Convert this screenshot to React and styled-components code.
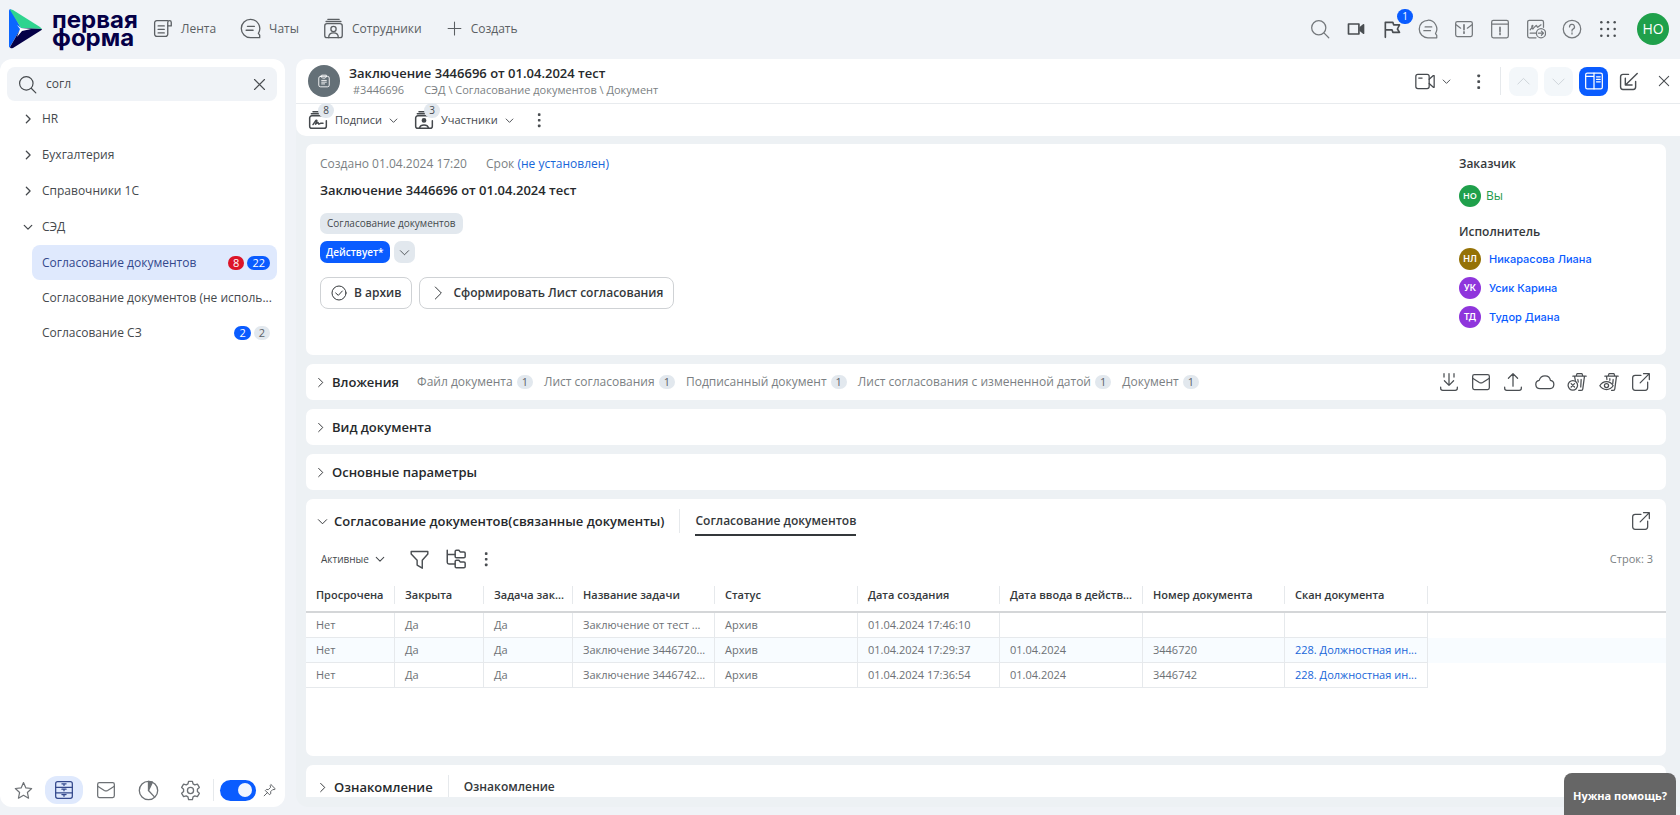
import React, { useState } from "react";
import styled, { createGlobalStyle, css } from "styled-components";

const ICONS = {
  feed: (
    <>
      <path d="M18 3H5.5A2.5 2.5 0 0 0 3 5.5v13A2.5 2.5 0 0 0 5.5 21h10a2.5 2.5 0 0 0 2.5-2.5V9" />
      <path d="M18 9V5a2 2 0 0 1 4 0v4z" />
      <path d="M7 9h7M7 13h7M7 17h7" />
    </>
  ),
  chat: (
    <>
      <path d="M12 1.5a10.5 10.5 0 1 0 0 21h10.5v-3l-1.500-2A10.500 10.500 0 0 0 12 1.500z" />
      <path d="M8.500 9.500h8M7 14h8" />
    </>
  ),
  people: (
    <>
      <rect x="2" y="6.500" width="20" height="16" rx="2.500" />
      <path d="M3.500 4h17M5.500 1.500h13" />
      <circle cx="12" cy="12.500" r="3" />
      <path d="M6.500 22.500c0-4 2.500-5.500 5.500-5.500s5.500 1.500 5.500 5.500" />
    </>
  ),
  plus: <path d="M12 3v18M3 12h18" />,
  search: (
    <>
      <circle cx="10.500" cy="10.500" r="8.500" />
      <path d="M17 17l5.500 5.500" />
    </>
  ),
  camera: (
    <>
      <path d="M3 6h12.500v12H3z" />
      <path d="M17 10.500L21 7v10l-4-3.500z" fill="currentColor" />
    </>
  ),
  flag: <path d="M4 22V4h9l1 3h7l-2.500 5 2.500 4h-8l-1-3H4" />,
  mailAlert: (
    <>
      <rect x="2" y="3" width="20" height="18" rx="2" />
      <path d="M2.500 7l5.500 4M21.500 7L16 11" />
      <path d="M12 7v6M12 15.500v1.500" strokeWidth="2" />
    </>
  ),
  dateAlert: (
    <>
      <rect x="2" y="1.500" width="20" height="21" rx="2" />
      <path d="M2 6h20" />
      <path d="M12 10v5M12 17v1.500" strokeWidth="2" />
    </>
  ),
  sign: (
    <>
      <path d="M12 22.500H4A2 2 0 0 1 2 20.500v-17a2 2 0 0 1 2-2h15a2 2 0 0 1 2 2V10" />
      <path d="M5 13l3-4c1-2-1-2-1 0s1 4 2 2l3-3c1-1 1 2 2 2l4-3" />
      <path d="M5 17h7" />
      <circle cx="18" cy="17" r="5.500" />
      <path d="M15 17h6M18.500 14.500L21 17l-2.500 2.500" />
    </>
  ),
  help: (
    <>
      <circle cx="12" cy="12" r="10.500" />
      <path d="M9 9.500a3 3 0 1 1 4.200 2.700c-.8.400-1.200 1-1.200 1.800v.500M12 16.500v1.500" />
    </>
  ),
  apps: (
    <g fill="currentColor" stroke="none">
      {[4, 12, 20].map((y) =>
        [4, 12, 20].map((x) => <circle key={x + "-" + y} cx={x} cy={y} r="1.500" />)
      )}
    </g>
  ),
  close: <path d="M4 4l16 16M20 4L4 20" />,
  right: <path d="M8 3l9 9-9 9" />,
  down: <path d="M3 8l9 9 9-9" />,
  up: <path d="M3 16l9-9 9 9" />,
  dots: (
    <g fill="currentColor" stroke="none">
      <rect x="10.500" y="3" width="3.500" height="3.500" rx="1" />
      <rect x="10.500" y="10.500" width="3.500" height="3.500" rx="1" />
      <rect x="10.500" y="18" width="3.500" height="3.500" rx="1" />
    </g>
  ),
  star: <path d="M12 2l3 6.700 7.300.800-5.400 5 1.500 7.200L12 18l-6.400 3.700 1.500-7.200-5.400-5 7.300-.800z" />,
  cabinet: (
    <>
      <rect x="2" y="2" width="20" height="20" rx="2.500" />
      <path d="M2 8.700h20M2 15.300h20M12 4.500v2M12 11v2M12 17.500v2M9.500 4.500h5M9.500 11h5M9.500 17.500h5" />
    </>
  ),
  mail: (
    <>
      <rect x="2" y="3" width="20" height="18" rx="2" />
      <path d="M2 7.500l8 5a4 4 0 0 0 4 0l8-5" />
    </>
  ),
  clock: (
    <>
      <circle cx="12" cy="12" r="10.500" />
      <path d="M12 12V1.500a10.500 10.500 0 0 1 4.500 1z" fill="currentColor" />
      <path d="M12 12l6.500 7" />
    </>
  ),
  gear: (
    <>
      <circle cx="12" cy="12" r="3.500" />
      <path d="M9.800 1.500h4.400l.7 3 2 1.100 3-.9 2.200 3.800-2.200 2.100v2.500l2.200 2.100-2.200 3.800-3-.9-2 1.200-.7 3.200H9.800l-.7-3.200-2-1.200-3 .9-2.200-3.800 2.200-2.100v-2.500L1.900 8.500l2.200-3.800 3 .9 2-1.100z" />
    </>
  ),
  pin: <path d="M14 3l7 7-2 1.500-2-.5-4 4 .5 3L11 20l-7-7 2-2 3 .5 4-4L12.500 5zM7.500 16.500L2 22" />,
  clipboard: (
    <>
      <rect x="3" y="4" width="18" height="18" rx="3" />
      <path d="M8 5V2h8v3l-2 2h-4z" />
      <path d="M8 11h8M8 14h8M8 17h5" />
    </>
  ),
  signature: (
    <>
      <path d="M17 7H4.500A2.500 2.500 0 0 0 2 9.500v10A2.500 2.500 0 0 0 4.500 22h15a2.500 2.500 0 0 0 2.500-2.500V13" />
      <path d="M4 4.500h9M6 2h7" />
      <path d="M6 17.500l3.500-5c1.500-1 1.500 1 .5 2.500l-1 2 3-2 1 2 2-1h3" strokeWidth="1.800" />
    </>
  ),
  member: (
    <>
      <path d="M17 7H4.500A2.500 2.500 0 0 0 2 9.500v10A2.500 2.500 0 0 0 4.500 22h15a2.500 2.500 0 0 0 2.500-2.500V13" />
      <path d="M4 4.500h9M6 2h7" />
      <circle cx="12" cy="12.500" r="2" fill="currentColor" />
      <path d="M6.500 21.500c1-3 3-3.500 5.500-3.500s4.500.5 5.500 3.500" />
    </>
  ),
  video: (
    <>
      <rect x="1" y="4" width="16" height="17" rx="2.500" />
      <path d="M4.500 8.500h4M17 10l5-4.500h1v14h-1l-5-4.500" />
    </>
  ),
  panels: (
    <>
      <rect x="2" y="2.500" width="20" height="19" rx="2" />
      <path d="M12 2.500v19M2 6.500h10M15 7h4.500M15 10h4.500M15 13h4.500" />
    </>
  ),
  shrink: <path d="M12 3H5a3 3 0 0 0-3 3v13a3 3 0 0 0 3 3h13a3 3 0 0 0 3-3v-7M23 2L8.500 16M8 8v8.500h8.500" />,
  checkCircle: (
    <>
      <circle cx="12" cy="12" r="10.500" />
      <path d="M7 12l4 3.500 6-6.500" />
    </>
  ),
  download: <path d="M2 18v1.500A2.500 2.500 0 0 0 4.500 22h15a2.500 2.500 0 0 0 2.500-2.500V18M12 2v14M6.500 10.500L12 16l5.500-5.500M6 2v4M18 2v4" />,
  upload: <path d="M2 18v1.500A2.500 2.500 0 0 0 4.500 22h15a2.500 2.500 0 0 0 2.500-2.500V18M12 17V2M6.500 7.500L12 2l5.500 5.500" />,
  cloud: <path d="M6 20a5 5 0 0 1-1-9.900C6 6.500 8.500 4.500 12 4.500s6 2 6.500 5.600A5 5 0 0 1 18 20z" />,
  binClose: (
    <>
      <path d="M7 5h16M11 5l1-3h6l1 3M9 5l1 5M21 5l-2 15a2 2 0 0 1-2 2h-3M13 9l.5 3M17 9l-.5 9" />
      <circle cx="7" cy="16" r="5.700" />
      <path d="M5 14l4 4M9 14l-4 4" />
    </>
  ),
  binEye: (
    <>
      <path d="M7 5h16M11 5l1-3h6l1 3M9 5l.5 4M21 5l-2 15a2 2 0 0 1-2 2h-2M13 8v2M17 9l-.5 5" />
      <path d="M1 16.500c4-6.500 12-6.500 16 0-4 6-12 6-16 0z" />
      <circle cx="9" cy="16.300" r="2.500" />
    </>
  ),
  external: <path d="M12 4H5a3 3 0 0 0-3 3v12a3 3 0 0 0 3 3h12a3 3 0 0 0 3-3v-7M11 13L22 2M15 2h7v7" />,
  filter: <path d="M1.500 2h21v3l-7 8v10L9 19v-6L1.500 5z" />,
  tree: (
    <>
      <path d="M1.500 1.500V16a2 2 0 0 0 2 2H11M1.500 6.500H11" />
      <path d="M12.500 1.500h3l1.500 2h4.500A1.500 1.500 0 0 1 23 5v4a1.500 1.500 0 0 1-1.500 1.500h-9A1.500 1.500 0 0 1 11 9V3a1.500 1.500 0 0 1 1.500-1.500z" />
      <path d="M12.500 13.500h3l1.500 2h4.500A1.500 1.500 0 0 1 23 17v4a1.500 1.500 0 0 1-1.500 1.500h-9A1.500 1.500 0 0 1 11 21v-6a1.500 1.500 0 0 1 1.500-1.500z" />
    </>
  ),
};

const Icon = ({ name, size = 20, weight = 1.5 }) => (
  <StSvg
    width={size}
    height={size}
    viewBox="0 0 24 24"
    fill="none"
    stroke="currentColor"
    strokeWidth={weight}
    strokeLinecap="round"
    strokeLinejoin="round"
    aria-hidden="true"
  >
    {ICONS[name]}
  </StSvg>
);

const Logo = () => (
  <StLogo href="#">
    <StSvg width="34" height="40" viewBox="0 0 34 40" aria-hidden="true">
      <path d="M2 .5 12 19 .5 38.500Q0 39 0 37V2Q0-.5 2 .5z" fill="#0b66ff" />
      <path d="M1 1Q2 0 4 1l27 17 2 2-21-1z" fill="#2fd48f" />
      <path d="M12 19l21 1q0 1-2 2L4 39q-3 1-3-1z" fill="#050047" />
      <path d="M8 16l4 3 10 1-9 2-5 6 3-8z" fill="#fff" />
    </StSvg>
    <StLogoText>
      первая
      <br />
      форма
    </StLogoText>
  </StLogo>
);

const NAV = [
  { icon: "feed", label: "Лента" },
  { icon: "chat", label: "Чаты" },
  { icon: "people", label: "Сотрудники" },
  { icon: "plus", label: "Создать" },
];

const TOOLS = [
  { icon: "search", label: "Поиск" },
  { icon: "camera", label: "Видеозвонок", dark: true },
  { icon: "flag", label: "Задачи", dark: true, count: 1 },
  { icon: "chat", label: "Чаты" },
  { icon: "mailAlert", label: "Непрочитанные" },
  { icon: "dateAlert", label: "Просроченные" },
  { icon: "sign", label: "На подпись" },
  { icon: "help", label: "Справка" },
  { icon: "apps", label: "Приложения", dark: true },
];

const GROUPS = ["HR", "Бухгалтерия", "Справочники 1С"];

const ATTACHMENTS = [
  "Файл документа",
  "Лист согласования",
  "Подписанный документ",
  "Лист согласования с измененной датой",
  "Документ",
];

const ATTACH_ACTIONS = [
  ["download", "Скачать"],
  ["mail", "Отправить"],
  ["upload", "Загрузить"],
  ["cloud", "Облако"],
  ["binClose", "Удалить"],
  ["binEye", "Корзина"],
  ["external", "Открыть"],
];

const PERFORMERS = [
  { initials: "НЛ", name: "Никарасова Лиана", color: "#957206" },
  { initials: "УК", name: "Усик Карина", color: "#8f35dc" },
  { initials: "ТД", name: "Тудор Диана", color: "#8f35dc" },
];

const COLUMNS = [
  { title: "Просрочена", width: 89 },
  { title: "Закрыта", width: 89 },
  { title: "Задача зак...", width: 89 },
  { title: "Название задачи", width: 142 },
  { title: "Статус", width: 143 },
  { title: "Дата создания", width: 142 },
  { title: "Дата ввода в действ...", width: 143 },
  { title: "Номер документа", width: 142 },
  { title: "Скан документа", width: 143 },
];

const ROWS = [
  ["Нет", "Да", "Да", "Заключение от тест ...", "Архив", "01.04.2024 17:46:10", "", "", ""],
  ["Нет", "Да", "Да", "Заключение 3446720...", "Архив", "01.04.2024 17:29:37", "01.04.2024", "3446720", "228. Должностная ин..."],
  ["Нет", "Да", "Да", "Заключение 3446742...", "Архив", "01.04.2024 17:36:54", "01.04.2024", "3446742", "228. Должностная ин..."],
];

const TopBar = () => (
  <StTopBar>
    <Logo />
    <StNav>
      {NAV.map((item) => (
        <StNavLink href="#" key={item.label}>
          <Icon name={item.icon} size={item.icon === "plus" ? 17 : 21} />
          {item.label}
        </StNavLink>
      ))}
    </StNav>
    <StTools>
      {TOOLS.map((tool, i) => (
        <StTool key={i} $dark={tool.dark} aria-label={tool.label}>
          <Icon name={tool.icon} size={20} weight={tool.dark ? 2 : 1.5} />
          {tool.count && <StToolCount>{tool.count}</StToolCount>}
        </StTool>
      ))}
    </StTools>
    <StAvatar $size={32} $color="#1fa04b">
      НО
    </StAvatar>
  </StTopBar>
);

const Sidebar = () => {
  const [query, setQuery] = useState("согл");
  const [pinned, setPinned] = useState(true);

  return (
    <StSidebar>
      <StSearch>
        <Icon name="search" size={19} />
        <input
          aria-label="Поиск по разделам"
          value={query}
          onChange={(e) => setQuery(e.target.value)}
        />
        <StIconBtn aria-label="Очистить" onClick={() => setQuery("")}>
          <Icon name="close" size={15} weight={1.8} />
        </StIconBtn>
      </StSearch>
      <StTree>
        {GROUPS.map((group) => (
          <StGroup key={group}>
            <Icon name="right" size={10} weight={3} />
            {group}
          </StGroup>
        ))}
        <StGroup>
          <Icon name="down" size={10} weight={3} />
          СЭД
        </StGroup>
        <StLeaf href="#" $active>
          <span>Согласование документов</span>
          <StBadge $kind="red">8</StBadge>
          <StBadge $kind="blue">22</StBadge>
        </StLeaf>
        <StLeaf href="#">
          <span>Согласование документов (не исполь...</span>
        </StLeaf>
        <StLeaf href="#">
          <span>Согласование СЗ</span>
          <StBadge $kind="blue">2</StBadge>
          <StBadge>2</StBadge>
        </StLeaf>
      </StTree>
      <StDock>
        <StDockBtn aria-label="Избранное">
          <Icon name="star" size={19} />
        </StDockBtn>
        <StDockBtn aria-label="Разделы" $active>
          <Icon name="cabinet" size={20} />
        </StDockBtn>
        <StDockBtn aria-label="Почта">
          <Icon name="mail" size={20} />
        </StDockBtn>
        <StDockBtn aria-label="Время">
          <Icon name="clock" size={21} />
        </StDockBtn>
        <StDockBtn aria-label="Настройки">
          <Icon name="gear" size={21} />
        </StDockBtn>
        <StRule $height={22} />
        <StSwitch
          type="checkbox"
          role="switch"
          aria-label="Фильтр"
          checked={pinned}
          onChange={(e) => setPinned(e.target.checked)}
        />
        <StIconBtn aria-label="Закрепить">
          <Icon name="pin" size={14} />
        </StIconBtn>
      </StDock>
    </StSidebar>
  );
};

const TaskHeader = () => (
  <StTaskHeader>
    <StTaskTop>
      <StAvatar $size={32} $color="#647077">
        <Icon name="clipboard" size={14} />
      </StAvatar>
      <StTaskTitle>
        <h1>Заключение 3446696 от 01.04.2024 тест</h1>
        <p>
          <span>#3446696</span>
          <span>СЭД \ Согласование документов \ Документ</span>
        </p>
      </StTaskTitle>
      <StTextBtn aria-label="Видеовстреча">
        <Icon name="video" size={20} />
        <Icon name="down" size={9} weight={2.5} />
      </StTextBtn>
      <StMore aria-label="Ещё">
        <Icon name="dots" size={19} />
      </StMore>
      <StRule $height={28} />
      <StSquares>
        <StSquare aria-label="Предыдущая" $kind="muted">
          <Icon name="up" size={15} />
        </StSquare>
        <StSquare aria-label="Следующая" $kind="muted">
          <Icon name="down" size={15} />
        </StSquare>
        <StSquare aria-label="Панели" $kind="blue">
          <Icon name="panels" size={20} />
        </StSquare>
        <StSquare aria-label="Свернуть">
          <Icon name="shrink" size={19} weight={1.8} />
        </StSquare>
        <StSquare aria-label="Закрыть">
          <Icon name="close" size={14} weight={1.8} />
        </StSquare>
      </StSquares>
    </StTaskTop>
    <StTaskMenu>
      <StTextBtn>
        <StCounted>
          <Icon name="signature" size={20} weight={1.8} />
          <StCount>8</StCount>
        </StCounted>
        Подписи
        <Icon name="down" size={9} weight={2.5} />
      </StTextBtn>
      <StTextBtn>
        <StCounted>
          <Icon name="member" size={20} weight={1.8} />
          <StCount>3</StCount>
        </StCounted>
        Участники
        <Icon name="down" size={9} weight={2.5} />
      </StTextBtn>
      <StIconBtn aria-label="Ещё">
        <Icon name="dots" size={18} />
      </StIconBtn>
    </StTaskMenu>
  </StTaskHeader>
);

const Summary = () => (
  <StSummary>
    <StSummaryMain>
      <StMeta>
        <span>Создано 01.04.2024 17:20</span>
        <span>
          Срок <a href="#">(не установлен)</a>
        </span>
      </StMeta>
      <h2>Заключение 3446696 от 01.04.2024 тест</h2>
      <StChip>Согласование документов</StChip>
      <StStatusRow>
        <StStatus>Действует*</StStatus>
        <StStatusMore aria-label="Сменить статус">
          <Icon name="down" size={11} weight={2} />
        </StStatusMore>
      </StStatusRow>
      <StActions>
        <StAction>
          <Icon name="checkCircle" size={16} />
          В архив
        </StAction>
        <StAction>
          <Icon name="right" size={16} />
          Сформировать Лист согласования
        </StAction>
      </StActions>
    </StSummaryMain>
    <StPeople>
      <h3>Заказчик</h3>
      <StPerson href="#" $self>
        <StAvatar $size={22} $color="#1fa04b">
          НО
        </StAvatar>
        Вы
      </StPerson>
      <h3>Исполнитель</h3>
      {PERFORMERS.map((p) => (
        <StPerson href="#" key={p.name}>
          <StAvatar $size={22} $color={p.color}>
            {p.initials}
          </StAvatar>
          {p.name}
        </StPerson>
      ))}
    </StPeople>
  </StSummary>
);

const Related = () => (
  <StRelated>
    <StTabs>
      <StSectionBtn>
        <Icon name="down" size={11} weight={2} />
        Согласование документов(связанные документы)
      </StSectionBtn>
      <StRule $height={24} />
      <StTab $active>Согласование документов</StTab>
      <StPush>
        <StIconBtn aria-label="Открыть">
          <Icon name="external" size={20} />
        </StIconBtn>
      </StPush>
    </StTabs>
    <StFilters>
      <StStateBtn>
        Активные
        <Icon name="down" size={10} weight={2.5} />
      </StStateBtn>
      <StFilterBtn aria-label="Фильтр">
        <Icon name="filter" size={19} weight={1.8} />
      </StFilterBtn>
      <StFilterBtn aria-label="Дерево">
        <Icon name="tree" size={20} weight={1.8} />
      </StFilterBtn>
      <StIconBtn aria-label="Ещё">
        <Icon name="dots" size={18} />
      </StIconBtn>
      <StPush>Строк: 3</StPush>
    </StFilters>
    <StTable>
      <colgroup>
        {COLUMNS.map((c) => (
          <StCol key={c.title} $width={c.width} />
        ))}
        <col />
      </colgroup>
      <thead>
        <tr>
          {COLUMNS.map((c) => (
            <th key={c.title}>
              <div>{c.title}</div>
            </th>
          ))}
          <th />
        </tr>
      </thead>
      <tbody>
        {ROWS.map((row, i) => (
          <tr key={i}>
            {row.map((cell, j) => (
              <td key={j}>{j === 8 && cell ? <a href="#">{cell}</a> : cell}</td>
            ))}
            <td />
          </tr>
        ))}
      </tbody>
    </StTable>
  </StRelated>
);

export default function App() {
  return (
    <StApp>
      <GlobalStyle />
      <TopBar />
      <StBody>
        <Sidebar />
        <StMain>
          <TaskHeader />
          <StCards>
            <Summary />
            <StSection>
              <StSectionBtn>
                <Icon name="right" size={11} weight={2} />
                Вложения
              </StSectionBtn>
              <StAttachments>
                {ATTACHMENTS.map((name) => (
                  <li key={name}>
                    {name}
                    <StBadge>1</StBadge>
                  </li>
                ))}
              </StAttachments>
              <StAttachActions>
                {ATTACH_ACTIONS.map(([icon, label]) => (
                  <StIconBtn key={icon} aria-label={label}>
                    <Icon name={icon} size={20} />
                  </StIconBtn>
                ))}
              </StAttachActions>
            </StSection>
            <StSection>
              <StSectionBtn>
                <Icon name="right" size={11} weight={2} />
                Вид документа
              </StSectionBtn>
            </StSection>
            <StSection>
              <StSectionBtn>
                <Icon name="right" size={11} weight={2} />
                Основные параметры
              </StSectionBtn>
            </StSection>
            <Related />
            <StLastCard>
              <StTabs>
                <StSectionBtn>
                  <Icon name="right" size={11} weight={2} />
                  Ознакомление
                </StSectionBtn>
                <StRule $height={24} />
                <StTab>Ознакомление</StTab>
              </StTabs>
            </StLastCard>
          </StCards>
        </StMain>
      </StBody>
      <StHelp>Нужна помощь?</StHelp>
    </StApp>
  );
}

const GlobalStyle = createGlobalStyle`
  * {
    box-sizing: border-box;
  }
  body {
    margin: 0;
    background-color: #f0f3f7;
    color: #45494d;
    font-family: "Open Sans", "Noto Sans", sans-serif;
    font-size: 12px;
    line-height: 18px;
  }
  h1, h2, h3, p, ul {
    margin: 0;
    padding: 0;
  }
  button, input {
    padding: 0;
    border: 0;
    background: none;
    color: inherit;
    font: inherit;
  }
  a {
    color: #1766d9;
    text-decoration: none;
  }
`;

const StSvg = styled.svg`
  display: block;
  flex: none;
`;

const StApp = styled.div`
  display: flex;
  flex-direction: column;
  height: 100vh;
  overflow: hidden;
`;

const StTopBar = styled.header`
  display: flex;
  align-items: center;
  height: 59px;
  padding: 0 11px 2px 9px;
`;

const StLogo = styled.a`
  display: flex;
  align-items: center;
  gap: 9px;
  width: 143px;
`;

const StLogoText = styled.strong`
  color: #050047;
  font: 700 24px/18px Inter, sans-serif;
`;

const StNav = styled.nav`
  display: flex;
  gap: 24px;
`;

const StNavLink = styled.a`
  display: flex;
  align-items: center;
  gap: 8px;
  color: #5b5f63;
`;

const StTools = styled.div`
  display: flex;
  gap: 16px;
  margin: 0 19px 0 auto;
`;

const StTool = styled.button`
  position: relative;
  color: ${(props) => (props.$dark ? "#4a4e52" : "#74787c")};
`;

const StToolCount = styled.span`
  position: absolute;
  top: -10px;
  left: 15px;
  width: 16px;
  height: 15px;
  border-radius: 8px;
  background-color: #0a5cff;
  color: white;
  font-size: 10px;
  line-height: 15px;
  text-align: center;
`;

const StAvatar = styled.span`
  display: flex;
  flex: none;
  justify-content: center;
  align-items: center;
  width: ${(props) => props.$size}px;
  height: ${(props) => props.$size}px;
  border-radius: 50%;
  background-color: ${(props) => props.$color};
  color: white;
  font-size: ${(props) => (props.$size > 30 ? 14 : 9)}px;
  font-weight: ${(props) => (props.$size > 30 ? 400 : 600)};
`;

const StBody = styled.div`
  display: flex;
  flex: 1;
  gap: 11px;
  min-height: 0;
  padding-bottom: 8px;
`;

const StSidebar = styled.aside`
  display: flex;
  flex-direction: column;
  flex: none;
  width: 285px;
  padding: 8px 7px 3px;
  border-radius: 12px;
  background-color: white;
`;

const StSearch = styled.div`
  display: flex;
  align-items: center;
  gap: 9px;
  width: 270px;
  height: 34px;
  padding: 0 10px 0 11px;
  border-radius: 8px;
  background-color: #f0f3f7;

  input {
    flex: 1;
    min-width: 0;
    outline: 0;
  }
`;

const StIconBtn = styled.button`
  display: flex;
  justify-content: center;
  align-items: center;
  color: #4a4e52;
`;

const StTree = styled.nav`
  flex: 1;
  width: 270px;
`;

const StGroup = styled.button`
  display: flex;
  align-items: center;
  gap: 9px;
  width: 100%;
  height: 36px;
  padding-left: 16px;
  text-align: left;
`;

const StLeaf = styled.a`
  display: flex;
  align-items: center;
  gap: 3px;
  height: 35px;
  margin-left: 25px;
  padding: 0 7px 0 10px;
  border-radius: 8px;
  background-color: ${(props) => (props.$active ? "#dfe9fd" : "transparent")};
  color: ${(props) => (props.$active ? "#33488c" : "#45494d")};

  > span:first-child {
    flex: 1;
    white-space: nowrap;
  }
`;

const badgeKinds = {
  red: css`
    background-color: #dc1428;
    color: white;
  `,
  blue: css`
    background-color: #0a5cff;
    color: white;
  `,
};

const StBadge = styled.span`
  min-width: 16px;
  height: 14px;
  padding: 0 5px;
  border-radius: 7px;
  background-color: #e2e8ee;
  color: #5b6166;
  font-size: 11px;
  line-height: 14px;
  text-align: center;
  ${(props) => badgeKinds[props.$kind]}
`;

const StDock = styled.div`
  display: flex;
  align-items: center;
  height: 28px;
  color: #6d7175;
`;

const StDockBtn = styled.button`
  display: flex;
  justify-content: center;
  align-items: center;
  width: 38px;
  height: 28px;
  margin-right: 4px;
  border-radius: 12px;
  background-color: ${(props) => (props.$active ? "#dfe9fd" : "transparent")};
  color: ${(props) => (props.$active ? "#33488c" : "#6d7175")};

  &:first-child {
    width: 32px;
    margin-right: 6px;
  }
`;

const StRule = styled.span`
  flex: none;
  width: 1px;
  height: ${(props) => props.$height}px;
  background-color: #e6e9ec;
`;

const StSwitch = styled.input`
  display: flex;
  align-items: center;
  width: 36px;
  height: 21px;
  margin: 0 7px 0 6px;
  padding: 0 4px;
  border-radius: 11px;
  background-color: #9aa1a7;
  appearance: none;

  &::before {
    content: "";
    width: 14px;
    height: 14px;
    border-radius: 50%;
    background-color: #f0f5ff;
  }

  &:checked {
    justify-content: flex-end;
    background-color: #0a5cff;
  }
`;

const StMain = styled.main`
  display: flex;
  flex-direction: column;
  flex: 1;
  min-width: 0;
  padding-bottom: 10px;
  border-radius: 12px 0 0 12px;
  background-color: #edf1f4;
`;

const StTaskHeader = styled.header`
  flex: none;
  border-radius: 10px 0 0 10px;
  background-color: white;
`;

const StTaskTop = styled.div`
  display: flex;
  align-items: center;
  height: 45px;
  padding: 0 2px 0 12px;
  border-bottom: 1px solid #e8ebee;
`;

const StTaskTitle = styled.div`
  flex: 1;
  padding-left: 9px;

  h1 {
    color: #26292c;
    font-size: 13px;
    font-weight: 600;
    line-height: 18px;
  }

  p {
    display: flex;
    gap: 20px;
    padding-left: 4px;
    color: #7b7f83;
    font-size: 11px;
    line-height: 16px;
  }
`;

const StTextBtn = styled.button`
  display: flex;
  align-items: center;
  gap: 7px;
  color: #45494d;
  font-size: 11px;
`;

const StMore = styled(StIconBtn)`
  margin: 0 12px 0 18px;
`;

const StSquares = styled.div`
  display: flex;
  gap: 6px;
  margin-left: 8px;
`;

const squareKinds = {
  muted: css`
    background-color: #f3f7fa;
    color: #ccd2d7;
  `,
  blue: css`
    background-color: #0a5cff;
    color: white;
  `,
};

const StSquare = styled(StIconBtn)`
  width: 29px;
  height: 29px;
  border-radius: 8px;
  ${(props) => squareKinds[props.$kind]}
`;

const StTaskMenu = styled.div`
  display: flex;
  align-items: center;
  gap: 16px;
  height: 32px;
  padding-left: 12px;
`;

const StCounted = styled.span`
  position: relative;
`;

const StCount = styled.span`
  position: absolute;
  top: -7px;
  left: 10px;
  width: 16px;
  height: 15px;
  border-radius: 8px;
  background-color: #e2e8ee;
  font-size: 10px;
  line-height: 15px;
  text-align: center;
`;

const StCards = styled.div`
  display: flex;
  flex-direction: column;
  flex: 1;
  gap: 9px;
  min-height: 0;
  padding: 8px 14px 0 10px;
  overflow: hidden;
`;

const cardShape = css`
  flex: none;
  border-radius: 7px;
  background-color: white;
`;

const StSummary = styled.section`
  ${cardShape}
  display: flex;
  min-height: 211px;
  padding: 11px 14px 10px;
`;

const StSummaryMain = styled.div`
  flex: 1;

  h2 {
    margin: 8px 0 14px;
    color: #26292c;
    font-size: 13px;
    font-weight: 600;
    line-height: 18px;
  }
`;

const StMeta = styled.p`
  display: flex;
  gap: 19px;
  color: #7b7f83;
  font-size: 12px;
`;

const StChip = styled.span`
  display: inline-block;
  padding: 0 7px;
  border-radius: 7px;
  background-color: #e2e8ee;
  font-size: 10px;
  line-height: 21px;
`;

const StStatusRow = styled.div`
  display: flex;
  gap: 4px;
  margin: 7px 0 14px;
`;

const StStatus = styled.button`
  height: 22px;
  padding: 0 6px;
  border-radius: 7px;
  background-color: #0a5cff;
  color: white;
  font-size: 10px;
  font-weight: 600;
`;

const StStatusMore = styled(StIconBtn)`
  width: 21px;
  border-radius: 7px;
  background-color: #e2e8ee;
`;

const StActions = styled.div`
  display: flex;
  gap: 7px;
`;

const StAction = styled.button`
  display: flex;
  align-items: center;
  gap: 7px;
  height: 32px;
  padding: 0 10px;
  border: 1px solid #cfd2d5;
  border-radius: 8px;
  color: #34383b;
  font-size: 12px;
  font-weight: 600;
`;

const StPeople = styled.div`
  display: flex;
  flex-direction: column;
  gap: 7px;
  width: 193px;

  h3 {
    color: #34383b;
    font-size: 12px;
    font-weight: 600;
    line-height: 18px;
  }

  h3:not(:first-child) {
    margin-top: 9px;
  }
`;

const StPerson = styled.a`
  display: flex;
  align-items: center;
  gap: 8px;
  color: #0a5cff;
  font: 500 11px/22px Inter, sans-serif;

  ${(props) =>
    props.$self &&
    css`
      gap: 5px;
      margin-top: 5px;
      color: #1f9a4b;
      font: 400 12px/22px "Open Sans", sans-serif;
    `}
`;

const StSection = styled.section`
  ${cardShape}
  display: flex;
  align-items: center;
  gap: 18px;
  min-height: 36px;
  padding: 0 15px 0 9px;
`;

const StSectionBtn = styled.button`
  display: flex;
  align-items: center;
  gap: 6px;
  color: #26292c;
  font-size: 13px;
  font-weight: 600;
  white-space: nowrap;
`;

const StAttachments = styled.ul`
  display: flex;
  flex: 1;
  gap: 11px;
  color: #7b7f83;
  font-size: 12px;
  list-style: none;

  li {
    display: flex;
    align-items: center;
    gap: 4px;
    white-space: nowrap;
  }
`;

const StAttachActions = styled.div`
  display: flex;
  gap: 12px;
`;

const StRelated = styled.section`
  ${cardShape}
  min-height: 257px;
`;

const StTabs = styled.div`
  display: flex;
  align-items: center;
  gap: 15px;
  height: 44px;
  padding: 0 15px 0 11px;
`;

const StTab = styled.button`
  height: 28px;
  margin-top: 1px;
  padding-top: 1px;
  border-bottom: 2px solid ${(props) => (props.$active ? "#34383b" : "transparent")};
  color: #34383b;
  font-size: 12px;
  font-weight: 600;
`;

const StPush = styled.span`
  margin-left: auto;
`;

const StFilters = styled.div`
  display: flex;
  align-items: center;
  gap: 6px;
  height: 32px;
  padding: 0 13px 0 15px;
  color: #7b7f83;
  font-size: 11px;
`;

const StStateBtn = styled(StTextBtn)`
  gap: 6px;
  margin-right: 14px;
  font-size: 10px;
`;

const StFilterBtn = styled(StIconBtn)`
  width: 30px;
`;

const StTable = styled.table`
  width: 100%;
  margin-top: 4px;
  border-collapse: separate;
  border-spacing: 0;
  table-layout: fixed;

  th {
    height: 34px;
    padding: 0;
    border-bottom: 2px solid #d4d6d8;
    color: #34383b;
    font-size: 11px;
    font-weight: 600;
    text-align: left;
  }

  th div,
  td {
    overflow: hidden;
    padding: 0 4px 0 10px;
    border-right: 1px solid #e6e9ec;
    text-overflow: ellipsis;
    white-space: nowrap;
  }

  td {
    height: 25px;
    border-bottom: 1px solid #e6e9ec;
    color: #6d7175;
    font-size: 11px;
  }

  td:last-child {
    border: 0;
  }

  tbody tr:nth-child(even) {
    background-color: #f8fcff;
  }
`;

const StCol = styled.col`
  width: ${(props) => props.$width}px;
`;

const StLastCard = styled.section`
  flex: 1;
  min-height: 0;
  border-radius: 7px 7px 0 0;
  background-color: white;
  overflow: hidden;
`;

const StHelp = styled.button`
  position: fixed;
  right: 4px;
  bottom: 0;
  height: 42px;
  padding: 4px 9px 0;
  border-radius: 8px 8px 0 0;
  background-color: #666;
  color: white;
  font-size: 11px;
  font-weight: 700;
`;
